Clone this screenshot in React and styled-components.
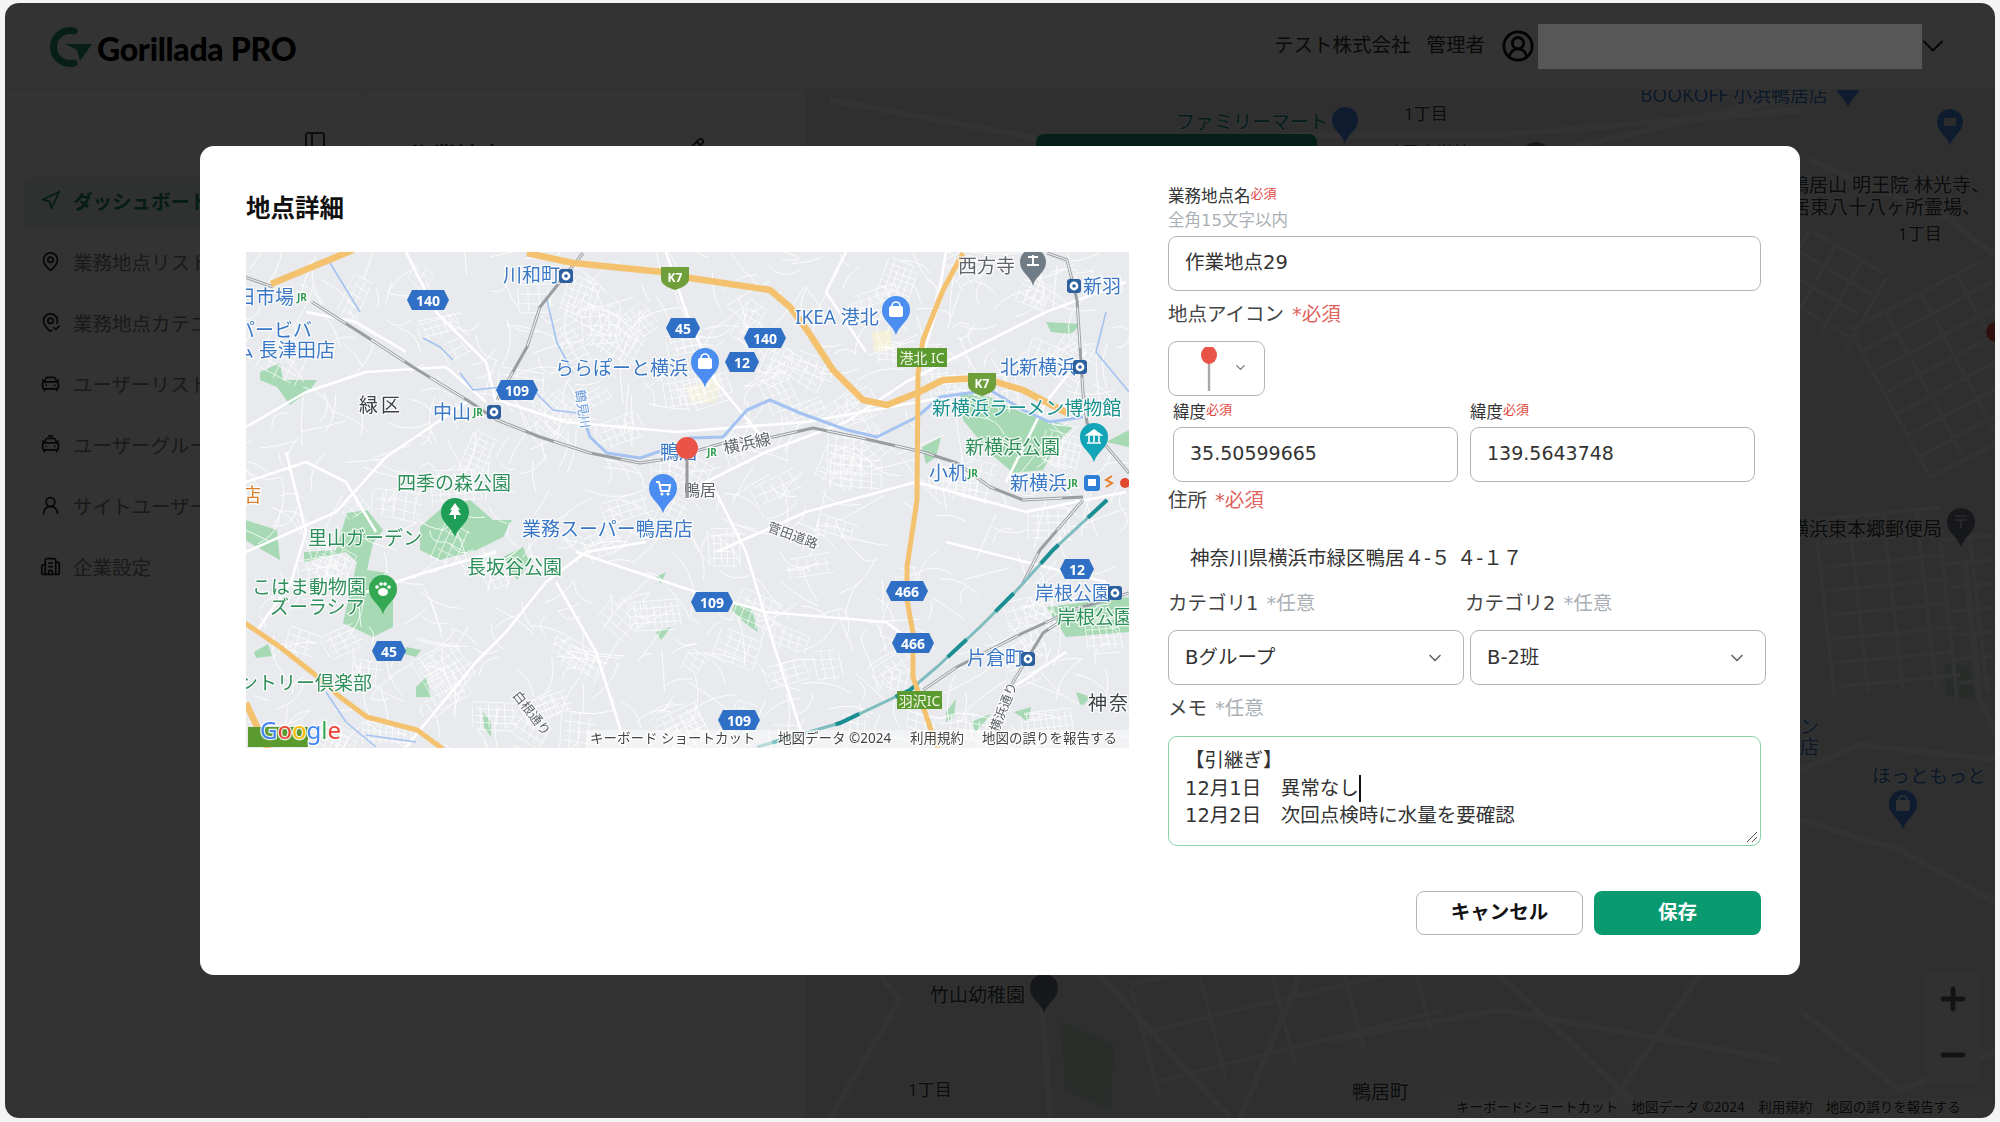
import styled, { createGlobalStyle } from "styled-components";
import {
  Building2,
  CarFront,
  CarTaxiFront,
  ChevronDown,
  CircleUserRound,
  MapPin,
  MapPinCheck,
  Minus,
  Navigation,
  PanelLeft,
  Pencil,
  Plus,
  UserRound,
} from "lucide-react";

const UI_FONT = `"DejaVu Sans", "Noto Sans CJK JP", sans-serif`;
const MAP_FONT = `"Noto Sans", "Noto Sans CJK JP", sans-serif`;

const GlobalStyle = createGlobalStyle`
  html, body {
    margin: 0;
    padding: 0;
    background: #f4f4f4;
  }
  body {
    font-family: ${UI_FONT};
    color: #333;
  }
  * {
    box-sizing: border-box;
  }
`;

const Window = styled.div`
  position: relative;
  width: 1990px;
  height: 1115px;
  margin: 3px 5px 4px;
  border-radius: 14px;
  overflow: hidden;
  background: #fff;
  display: flex;
  flex-direction: column;
`;

const Header = styled.header`
  height: 87px;
  flex: none;
  display: flex;
  align-items: center;
  justify-content: space-between;
  padding: 0 44px 0 45px;
  border-bottom: 1px solid #e4e4e4;
`;

const Logo = styled.div`
  display: flex;
  align-items: center;
  gap: 3px;
  margin-top: 1px;
`;

const LogoText = styled.span`
  font-family: Lato, sans-serif;
  font-weight: 900;
  font-size: 32px;
  color: #000;
  letter-spacing: -0.3px;
  margin-top: 3px;
`;

const HeaderRight = styled.div`
  display: flex;
  align-items: center;
  color: #555;
  font-size: 19.5px;
`;

const HeaderText = styled.span`
  margin: -6px 16px 0 0;
  color: #333;
`;

const RedactSlot = styled.div`
  width: 374px;
  height: 45px;
  margin: 0 3px;
`;

const RedactBar = styled.div`
  position: absolute;
  left: 1533px;
  top: 21px;
  width: 384px;
  height: 45px;
  background: #575757;
  z-index: 3;
`;

const Body = styled.div`
  flex: 1;
  display: flex;
  min-height: 0;
`;

const Sidebar = styled.aside`
  width: 357px;
  flex: none;
  padding: 0 13px 0 18px;
`;

const SidebarTop = styled.div`
  height: 87px;
  display: flex;
  justify-content: flex-end;
  padding: 40px 22px 0 0;
  color: #444;
`;

const NavList = styled.nav`
  display: flex;
  flex-direction: column;
  gap: 10px;
`;

const NavItem = styled.div`
  height: 51px;
  display: flex;
  align-items: center;
  gap: 12px;
  padding: 0 0 4px 17px;
  border-radius: 8px;
  font-size: 19.5px;
  white-space: nowrap;
  color: ${({ $active }) => ($active ? "#1a8a68" : "#808080")};
  background: ${({ $active }) => ($active ? "#e4f3ed" : "transparent")};
  font-weight: ${({ $active }) => ($active ? 700 : 400)};

  svg {
    flex: none;
    color: ${({ $active }) => ($active ? "#1a8a68" : "#222")};
  }
`;

const ListPane = styled.section`
  width: 443px;
  flex: none;
  border-left: 1px solid #ececec;
  display: flex;
  align-items: flex-start;
  justify-content: space-between;
  padding: 47px 100px 0 45px;
  font-size: 24px;
  font-weight: 700;
  color: #333;
`;

const BackMapArea = styled.div`
  position: relative;
  flex: 1;
  min-width: 0;
  background: #e8eaed;
`;

const BackMapSvg = styled.svg`
  display: block;
  width: 100%;
  height: 100%;
`;

const RouteButton = styled.div`
  position: absolute;
  left: 231px;
  top: 44px;
  width: 281px;
  height: 54px;
  border-radius: 8px;
  background: #1f9c78;
`;

const ZoomControl = styled.div`
  position: absolute;
  right: 15px;
  bottom: 35px;
  width: 55px;
  height: 112px;
  display: flex;
  flex-direction: column;
  background: #f3f3f3;
  color: #666;
`;

const ZoomButton = styled.div`
  flex: 1;
  display: flex;
  align-items: center;
  justify-content: center;
`;

const Overlay = styled.div`
  position: absolute;
  inset: 0;
  z-index: 2;
  display: flex;
  align-items: center;
  justify-content: center;
  background: rgba(0, 0, 0, 0.8);
`;

const Modal = styled.div`
  width: 1600px;
  height: 829px;
  display: grid;
  grid-template-columns: 883px 593px;
  column-gap: 39px;
  padding: 40px 0 0 46px;
  border-radius: 14px;
  background: #fff;
`;

const MapColumn = styled.div`
  padding-top: 5px;
`;

const ModalTitle = styled.h2`
  margin: 0 0 25px;
  height: 36px;
  line-height: 36px;
  font-size: 24.5px;
  font-weight: 700;
  color: #111;
`;

const MapSvg = styled.svg`
  display: block;
  width: 883px;
  height: 496px;
  background: #e8eaed;
  filter: blur(0.3px);
`;

const MapText = styled.text`
  font-family: ${MAP_FONT};
  font-size: ${({ $size }) => $size || 19}px;
  font-weight: ${({ $bold }) => ($bold ? 700 : 400)};
  fill: ${({ $tone }) => TONES[$tone] || $tone};
  dominant-baseline: central;
  text-anchor: ${({ $anchor }) => $anchor || "start"};
  stroke: ${({ $halo }) => ($halo === false ? "none" : "rgba(255,255,255,.85)")};
  stroke-width: 2.5px;
  paint-order: stroke;
  letter-spacing: ${({ $spacing }) => $spacing || 0}px;
`;

const FormColumn = styled.form`
  display: flex;
  flex-direction: column;
  margin: 0;
`;

const SmallLabel = styled.div`
  height: 20px;
  line-height: 20px;
  padding-top: 1px;
  font-size: 16.5px;
  color: #333;
  white-space: nowrap;
`;

const TinyRequired = styled.span`
  font-size: 13px;
  color: #e0443e;
  position: relative;
  top: -4px;
`;

const Hint = styled.div`
  height: 20px;
  line-height: 20px;
  margin: 5px 0;
  font-size: 16.5px;
  color: #aab0b5;
`;

const BigLabel = styled.div`
  height: 28px;
  line-height: 28px;
  padding-top: 1px;
  margin-top: ${({ $top }) => $top}px;
  font-size: 19.5px;
  color: #444;
  white-space: nowrap;
`;

const Mark = styled.span`
  margin-left: 8px;
  color: ${({ $optional }) => ($optional ? "#aab0b5" : "#e0605a")};
`;

const TextInput = styled.input`
  display: block;
  width: ${({ $width }) => $width || 593}px;
  height: 55px;
  padding: ${({ $numeric }) => ($numeric ? "0 16px 3px" : "0 16px 6px")};
  border: 1.5px solid #b4b4b4;
  border-radius: 9px;
  outline: none;
  background: #fff;
  font-family: ${UI_FONT};
  font-size: ${({ $numeric }) => ($numeric ? 19 : 19.5)}px;
  color: #333;
`;

const IconPicker = styled.div`
  width: 97px;
  height: 55px;
  margin-top: 13px;
  padding: 5px 0 0 32px;
  display: flex;
  gap: 16px;
  border: 1.5px solid #b4b4b4;
  border-radius: 9px;
  color: #777;

  svg:last-child {
    margin-top: 13px;
  }
`;

const CoordRow = styled.div`
  display: grid;
  grid-template-columns: 285px 285px;
  column-gap: 12px;
  margin: 6px 0 0 5px;
`;

const CoordField = styled.div`
  display: flex;
  flex-direction: column;
  gap: 5px;
`;

const AddressText = styled.div`
  height: 28px;
  line-height: 28px;
  margin-top: 29px;
  padding: 2px 0 0 22px;
  font-size: 19.5px;
  color: #333;
`;

const CategoryRow = styled.div`
  display: grid;
  grid-template-columns: 297px 301px;
  margin-top: 18px;
`;

const Dropdown = styled.div`
  width: 296px;
  height: 55px;
  margin: 13px 0 0 ${({ $offset }) => $offset || 0}px;
  padding: 0 18px 5px 16px;
  display: flex;
  align-items: center;
  justify-content: space-between;
  border: 1.5px solid #b4b4b4;
  border-radius: 9px;
  font-size: 19.5px;
  color: #333;

  svg {
    color: #666;
    margin-top: 5px;
  }
`;

const MemoBox = styled.div`
  position: relative;
  height: 110px;
  margin-top: 14px;
  padding: 10px 16px;
  border: 1.5px solid #86d3aa;
  border-radius: 9px;
  font-size: 19.5px;
  line-height: 27.5px;
  white-space: pre-wrap;
  color: #333;
`;

const Caret = styled.span`
  display: inline-block;
  width: 2px;
  height: 27px;
  margin-bottom: -7px;
  background: #111;
`;

const ResizeGrip = styled.svg`
  position: absolute;
  right: 2px;
  bottom: 2px;
`;

const ButtonRow = styled.div`
  display: flex;
  justify-content: flex-end;
  gap: 11px;
  margin-top: 45px;
`;

const Button = styled.button`
  width: 167px;
  height: 44px;
  padding: 0 0 5px;
  border-radius: 8px;
  border: ${({ $primary }) => ($primary ? "none" : "1.5px solid #b4b4b4")};
  background: ${({ $primary }) => ($primary ? "#0a9a6f" : "#fff")};
  color: ${({ $primary }) => ($primary ? "#fff" : "#111")};
  font-family: ${UI_FONT};
  font-size: 19.5px;
  font-weight: 700;
`;

const TONES = {
  blue: "#3a78c6",
  green: "#2f8f5b",
  teal: "#18918f",
  gray: "#5f6368",
  dark: "#3c4043",
  orange: "#d9822b",
};

// seeded so the street texture stays the same between renders
let seed = 4217;
const rnd = () => {
  seed = (seed * 16807) % 2147483647;
  return seed / 2147483647;
};

function gridPatch(x, y, w, h, angle, stepX, stepY) {
  const rad = (angle * Math.PI) / 180;
  const pt = (px, py) => {
    const rx = px * Math.cos(rad) - py * Math.sin(rad);
    const ry = px * Math.sin(rad) + py * Math.cos(rad);
    return `${(x + rx).toFixed(1)} ${(y + ry).toFixed(1)}`;
  };
  let d = "";
  for (let py = 0; py <= h; py += stepY) {
    d += `M${pt(rnd() * 6, py)}L${pt(w - rnd() * 6, py + rnd() * 2)}`;
  }
  for (let px = 0; px <= w; px += stepX) {
    d += `M${pt(px, rnd() * 5)}L${pt(px + rnd() * 2, h - rnd() * 5)}`;
  }
  return d;
}

function streets(count, width, height, reach) {
  let d = "";
  for (let i = 0; i < count; i += 1) {
    const x = rnd() * width;
    const y = rnd() * height;
    const a = rnd() * Math.PI * 2;
    const len = reach * (0.4 + rnd());
    const bend = (rnd() - 0.5) * reach * 0.7;
    const mx = x + (Math.cos(a) * len) / 2 - Math.sin(a) * bend;
    const my = y + (Math.sin(a) * len) / 2 + Math.cos(a) * bend;
    d += `M${x.toFixed(1)} ${y.toFixed(1)}Q${mx.toFixed(1)} ${my.toFixed(1)} ${(x + Math.cos(a) * len).toFixed(1)} ${(y + Math.sin(a) * len).toFixed(1)}`;
  }
  return d;
}

const line = (pts) => "M" + pts.map((p) => p.join(" ")).join("L");
const area = (pts) => pts.map((p) => p.join(",")).join(" ");

const FINE_STREETS = streets(620, 883, 496, 38);

function scatterPatches(count) {
  let d = "";
  for (let i = 0; i < count; i += 1) {
    d += gridPatch(
      rnd() * 860,
      rnd() * 480,
      22 + rnd() * 34,
      18 + rnd() * 28,
      (rnd() - 0.5) * 80,
      6 + rnd() * 5,
      6 + rnd() * 4,
    );
  }
  return d;
}

const GRID_STREETS = scatterPatches(110);

const MAIN_ROADS = [
  [[0, 175], [60, 140], [120, 120], [200, 115], [240, 150]],
  [[40, 200], [60, 280], [45, 330], [10, 380]],
  [[0, 300], [90, 260], [140, 205], [221, 150]],
  [[160, 495], [230, 410], [260, 380], [300, 330], [340, 300], [400, 290]],
  [[251, 148], [320, 170], [430, 180], [560, 170], [700, 145]],
  [[440, 240], [520, 200], [600, 170], [660, 130], [800, 60], [880, 30]],
  [[330, 300], [450, 340], [520, 360], [640, 370], [680, 400]],
  [[470, 300], [560, 260], [670, 230], [780, 260], [880, 240]],
  [[560, 495], [530, 400], [500, 300], [470, 240]],
  [[740, 495], [760, 440], [820, 400]],
  [[700, 290], [780, 310], [860, 330]],
  [[380, 495], [350, 400], [310, 330]],
  [[120, 340], [180, 320], [250, 300]],
  [[160, 0], [190, 60], [240, 110], [250, 150]],
  [[60, 60], [110, 70], [160, 100]],
  [[420, 0], [440, 60], [470, 130], [520, 190]],
  [[0, 230], [60, 210], [100, 230], [130, 280]],
  [[700, 0], [690, 60], [672, 120]],
  [[840, 100], [800, 150], [760, 230]],
  [[600, 0], [580, 40], [620, 100]],
];

const HIGHWAYS = [
  [[25, 32], [107, -2]],
  [[281, 1], [327, 11], [417, 20], [444, 26], [524, 38], [544, 55], [561, 78], [587, 118], [617, 148], [641, 153], [671, 141], [697, 128], [737, 126], [777, 138], [821, 161]],
  [[717, 1], [697, 38], [677, 88], [672, 121], [671, 248], [661, 315], [661, 348], [667, 381], [667, 425], [684, 475], [692, 497]],
  [[-1, 371], [34, 395], [67, 421], [94, 445], [121, 465], [171, 478], [197, 497]],
  [[0, 451], [14, 481], [22, 497]],
];

const RAILS = [
  [[-1, 25], [27, 35]],
  [[66, 50], [121, 85], [167, 115], [221, 148], [251, 168], [294, 185], [344, 201], [394, 211], [427, 206], [477, 191], [527, 185], [567, 176], [611, 185], [677, 200], [711, 211], [744, 235], [777, 248], [837, 245]],
  [[337, 1], [294, 55], [281, 95], [251, 148]],
  [[801, 1], [821, 8], [831, 48], [837, 141], [841, 171], [883, 221]],
  [[677, 438], [711, 415], [777, 381], [827, 358], [883, 341]],
  [[837, 248], [794, 298], [777, 331]],
  [[764, 435], [797, 381], [827, 361]],
];

const BULLET_TRAIN = [[861, 248], [807, 298], [771, 338], [734, 375], [691, 415], [664, 438], [594, 471], [511, 495]];

const RIVERS = [
  [[334, 155], [344, 185], [361, 201], [394, 206], [427, 195], [444, 186], [477, 185], [501, 158], [524, 148], [554, 161], [601, 178], [631, 185], [671, 165], [694, 145], [744, 138], [777, 158], [804, 170], [837, 165]],
  [[301, 48], [311, 91], [327, 121]],
  [[214, 121], [227, 138], [257, 135], [287, 138], [307, 158], [331, 161]],
  [[177, 86], [194, 95], [207, 108]],
  [[84, 11], [114, 60]],
  [[80, 440], [100, 470], [130, 495]],
  [[120, 483], [170, 490]],
  [[860, 60], [850, 100], [883, 140]],
];

const PARKS = [
  [[14, 120], [34, 111], [37, 128], [71, 128], [64, 138], [44, 153], [31, 135], [14, 128]],
  [[174, 275], [197, 255], [224, 248], [247, 268], [266, 268], [257, 285], [231, 298], [194, 308], [174, 298]],
  [[-1, 268], [31, 278], [34, 308], [4, 291], [-1, 288]],
  [[101, 261], [121, 258], [137, 278], [127, 291], [121, 318], [141, 321], [147, 341], [147, 375], [127, 385], [97, 371], [104, 340], [111, 310], [100, 300], [58, 310], [58, 300], [90, 298]],
  [[257, 305], [277, 295], [284, 311], [271, 328]],
  [[714, 141], [744, 145], [777, 161], [827, 175], [811, 191], [797, 218], [767, 221], [744, 201], [717, 168]],
  [[676, 195], [695, 185], [690, 205], [680, 212]],
  [[800, 70], [835, 72], [825, 82], [805, 80]],
  [[860, 190], [883, 178], [883, 195]],
  [[490, 350], [505, 355], [512, 380], [500, 372], [486, 358]],
  [[700, 460], [710, 447], [708, 465], [700, 470]],
  [[725, 470], [745, 462], [730, 480]],
  [[768, 460], [785, 455], [782, 470]],
  [[830, 440], [845, 445], [835, 455]],
  [[800, 355], [883, 345], [883, 380], [820, 385]],
  [[160, 395], [175, 398], [170, 405], [158, 402]],
  [[170, 435], [180, 425], [185, 445], [170, 445]],
  [[8, 400], [22, 392], [26, 404], [10, 406]],
  [[237, 460], [245, 470], [245, 485], [238, 475]],
  [[410, 325], [420, 320], [415, 332]],
  [[410, 380], [425, 375], [415, 388]],
];

const BADGES = [
  [182, 48, "140"],
  [437, 76, "45"],
  [271, 138, "109"],
  [519, 86, "140"],
  [496, 110, "12"],
  [466, 350, "109"],
  [831, 317, "12"],
  [493, 468, "109"],
  [143, 399, "45"],
  [661, 339, "466"],
  [667, 391, "466"],
];

const LABELS = [
  ["川和町", 257, 23, "blue"],
  ["日市場", -9, 45, "blue"],
  ["スーパービバ", 66, 78, "blue", { anchor: "end" }],
  ["ホーム 長津田店", 89, 98, "blue", { anchor: "end" }],
  ["ららぽーと横浜", 309, 116, "blue"],
  ["IKEA 港北", 549, 65, "blue"],
  ["西方寺", 712, 14, "gray"],
  ["新羽", 837, 34, "blue"],
  ["北新横浜", 754, 115, "blue"],
  ["新横浜ラーメン博物館", 686, 156, "teal"],
  ["新横浜公園", 719, 195, "green"],
  ["小机", 683, 221, "blue"],
  ["新横浜", 764, 231, "blue"],
  ["鴨居", 414, 200, "blue"],
  ["鴨居", 438, 238, "gray", { size: 16 }],
  ["業務スーパー鴨居店", 276, 277, "blue"],
  ["緑区", 113, 153, "dark", { spacing: 3 }],
  ["中山", 187, 160, "blue"],
  ["四季の森公園", 151, 231, "green"],
  ["里山ガーデン", 62, 286, "green"],
  ["長坂谷公園", 221, 315, "green"],
  ["こはま動物園", 6, 335, "green"],
  ["ズーラシア", 24, 355, "green"],
  ["カントリー倶楽部", 126, 431, "green", { anchor: "end" }],
  ["店", -4, 243, "orange"],
  ["岸根公園", 789, 341, "blue"],
  ["岸根公園", 811, 365, "green"],
  ["片倉町", 721, 406, "blue"],
  ["神奈川", 842, 451, "dark", { spacing: 2 }],
];

const TILTED_LABELS = [
  ["横浜線", 501, 191, -12, "gray", 16],
  ["白根通り", 286, 461, 52, "gray", 13],
  ["菅田道路", 547, 283, 20, "gray", 13],
  ["横浜通り", 757, 455, -68, "gray", 13],
  ["鶴見川", 337, 157, 82, "#6a9bd8", 13],
];

const ATTRIBUTION = [
  ["キーボード ショートカット", 344],
  ["地図データ ©2024", 532],
  ["利用規約", 664],
  ["地図の誤りを報告する", 736],
];

function Badge({ x, y, label }) {
  const w = label.length > 2 ? 16 : 12;
  return (
    <g transform={`translate(${x} ${y})`}>
      <polygon
        points={`${-w - 5},0 ${-w},-10 ${w},-10 ${w + 5},0 ${w},10 ${-w},10`}
        fill="#2f6fc6"
      />
      <MapText $tone="#fff" $size={14} $bold $anchor="middle" $halo={false}>
        {label}
      </MapText>
    </g>
  );
}

function Pin({ x, y, r = 14, color, children }) {
  return (
    <g transform={`translate(${x} ${y})`}>
      <path
        d={`M${-r} 0A${r} ${r} 0 1 1 ${r} 0C${r} ${r * 0.8} ${r * 0.25} ${r} 0 ${r * 1.8}C${-r * 0.25} ${r} ${-r} ${r * 0.8} ${-r} 0Z`}
        fill={color}
      />
      {children}
    </g>
  );
}

const BagGlyph = () => (
  <>
    <rect x="-7" y="-4" width="14" height="11" rx="2" fill="#fff" />
    <path d="M-4 -4a4 4 0 0 1 8 0" fill="none" stroke="#fff" strokeWidth="1.6" />
  </>
);

function MetroIcon({ x, y }) {
  return (
    <g transform={`translate(${x} ${y})`}>
      <rect x="-7" y="-7" width="14" height="14" rx="3" fill="#2b5f9e" />
      <circle r="4.4" fill="#fff" />
      <circle r="1.8" fill="#2b5f9e" />
    </g>
  );
}

function JrIcon({ x, y }) {
  return (
    <MapText x={x} y={y} $tone="#2e9c4f" $size={10} $bold $anchor="middle">
      JR
    </MapText>
  );
}

function SignBox({ x, y, w, h, label }) {
  return (
    <g>
      <rect x={x} y={y} width={w} height={h} fill="#5b9a2f" />
      {label && (
        <MapText x={x + w / 2} y={y + h / 2} $tone="#f2f7e8" $size={14} $anchor="middle" $halo={false}>
          {label}
        </MapText>
      )}
    </g>
  );
}

function Shield({ x, y }) {
  return (
    <g transform={`translate(${x} ${y})`}>
      <path d="M-14 -10H14V2C14 8 6 11 0 13C-6 11 -14 8 -14 2Z" fill="#6f9f3a" />
      <MapText $tone="#fff" $size={12} $bold $anchor="middle" $halo={false}>
        K7
      </MapText>
    </g>
  );
}

function LocationMap() {
  return (
    <MapSvg viewBox="0 0 883 496">
      {PARKS.map((p, i) => (
        <polygon key={i} points={area(p)} fill="#a6d9b4" />
      ))}
      <polygon points={area([[626, 80], [645, 78], [645, 98], [628, 100]])} fill="#f6f1d5" opacity="0.8" />
      <polygon points={area([[440, 135], [475, 125], [470, 150], [445, 152]])} fill="#f6f1d5" opacity="0.6" />
      <path d={FINE_STREETS} fill="none" stroke="#fff" strokeWidth="1" opacity="0.85" />
      <path d={GRID_STREETS} fill="none" stroke="#fff" strokeWidth="0.9" opacity="0.8" />
      {MAIN_ROADS.map((r, i) => (
        <path key={i} d={line(r)} fill="none" stroke="#fff" strokeWidth="2.6" strokeLinejoin="round" />
      ))}
      {RIVERS.map((r, i) => (
        <path key={i} d={line(r)} fill="none" stroke="#a4c3f2" strokeWidth={i === 0 ? 3 : 1.6} strokeLinejoin="round" />
      ))}
      {RAILS.map((r, i) => (
        <g key={i} fill="none" strokeLinejoin="round">
          <path d={line(r)} stroke="#9a9da1" strokeWidth="3" />
          <path d={line(r)} stroke="#eceef0" strokeWidth="1.2" strokeDasharray="40 30" />
        </g>
      ))}
      <path d={line(BULLET_TRAIN)} fill="none" stroke="#7fbcc0" strokeWidth="3" />
      <path d={line(BULLET_TRAIN)} fill="none" stroke="#1b8e94" strokeWidth="4" strokeDasharray="26 40" />
      {HIGHWAYS.map((h, i) => (
        <path key={i} d={line(h)} fill="none" stroke="#f4c26e" strokeWidth={i === 2 || i === 3 ? 5 : 6.5} strokeLinejoin="round" />
      ))}

      {BADGES.map(([x, y, label], i) => (
        <Badge key={i} x={x} y={y} label={label} />
      ))}
      <Shield x={429} y={25} />
      <Shield x={736} y={131} />
      <SignBox x={651} y={96} w={50} h={19} label="港北 IC" />
      <SignBox x={651} y={439} w={45} h={18} label="羽沢IC" />
      <SignBox x={2} y={475} w={60} h={20} />

      {LABELS.map(([text, x, y, tone, opts = {}], i) => (
        <MapText key={i} x={x} y={y} $tone={tone} $anchor={opts.anchor} $size={opts.size} $spacing={opts.spacing}>
          {text}
        </MapText>
      ))}
      {TILTED_LABELS.map(([text, x, y, rot, tone, size], i) => (
        <MapText key={i} x={x} y={y} $tone={tone} $size={size} $anchor="middle" transform={`rotate(${rot} ${x} ${y})`}>
          {text}
        </MapText>
      ))}

      <MetroIcon x={320} y={24} />
      <MetroIcon x={248} y={160} />
      <MetroIcon x={828} y={34} />
      <MetroIcon x={834} y={115} />
      <MetroIcon x={869} y={341} />
      <MetroIcon x={782} y={407} />
      <JrIcon x={56} y={45} />
      <JrIcon x={232} y={160} />
      <JrIcon x={466} y={200} />
      <JrIcon x={727} y={221} />
      <JrIcon x={827} y={231} />
      <rect x="838" y="223" width="16" height="16" rx="3" fill="#2f7fd6" />
      <rect x="842" y="227" width="8" height="7" fill="#fff" />
      <path d="M866 224l-6 4 6 3-6 4" fill="none" stroke="#e8812a" strokeWidth="2" />
      <circle cx="879" cy="231" r="5" fill="#e0492f" />

      <Pin x={650} y={58} r={14} color="#4b8df0">
        <BagGlyph />
      </Pin>
      <Pin x={459} y={110} r={14} color="#4b8df0">
        <BagGlyph />
      </Pin>
      <Pin x={787} y={10} r={13} color="#6f7b85">
        <path d="M-5 -5H5M0 -7V3M-6 3H6" stroke="#fff" strokeWidth="2" />
      </Pin>
      <Pin x={848} y={185} r={14} color="#12a5b8">
        <path d="M-7 -2L0 -7L7 -2ZM-5 -1V5M0 -1V5M5 -1V5M-7 6H7" stroke="#fff" strokeWidth="1.6" fill="#fff" />
      </Pin>
      <Pin x={417} y={236} r={14} color="#4b8df0">
        <path d="M-7 -6H-4L-2 3H6L7 -3H-3" fill="none" stroke="#fff" strokeWidth="2" />
        <circle cx="-1" cy="6" r="1.5" fill="#fff" />
        <circle cx="5" cy="6" r="1.5" fill="#fff" />
      </Pin>
      <Pin x={209} y={260} r={14} color="#1e9e56">
        <path d="M0 -9L5 -2H3L6 3H1V7H-1V3H-6L-3 -2H-5Z" fill="#fff" />
      </Pin>
      <Pin x={137} y={337} r={14} color="#34a853">
        <ellipse cx="0" cy="3" rx="5" ry="4" fill="#fff" />
        <circle cx="-6" cy="-2" r="1.8" fill="#fff" />
        <circle cx="-2" cy="-5" r="1.8" fill="#fff" />
        <circle cx="2" cy="-5" r="1.8" fill="#fff" />
        <circle cx="6" cy="-2" r="1.8" fill="#fff" />
      </Pin>
      <rect x="439.5" y="200" width="3" height="46" fill="#9a9a9a" />
      <circle cx="441" cy="196" r="11" fill="#ea5347" />

      <MapText x={14} y={477} $tone="#4285f4" $size={24}>
        G<tspan fill="#ea4335">o</tspan>
        <tspan fill="#fbbc05">o</tspan>
        <tspan fill="#4285f4">g</tspan>
        <tspan fill="#34a853">l</tspan>
        <tspan fill="#ea4335">e</tspan>
      </MapText>

      <rect x="340" y="478" width="543" height="18" fill="#fff" opacity="0.45" />
      {ATTRIBUTION.map(([text, x]) => (
        <MapText key={text} x={x} y={486} $tone="#444" $size={13.5}>
          {text}
        </MapText>
      ))}
    </MapSvg>
  );
}

const BACK_GRID = [
  gridPatch(1850, 330, 150, 170, -28, 40, 24),
  gridPatch(1815, 520, 130, 180, -6, 34, 24),
  gridPatch(1940, 540, 60, 160, -6, 30, 24),
  gridPatch(1810, 230, 90, 90, 30, 30, 24),
  gridPatch(1130, 985, 300, 120, -14, 70, 50),
].join("");

const BACK_ROADS = [
  [[830, 100], [1100, 150], [1300, 135], [1500, 135], [1800, 110]],
  [[1560, 150], [1800, 95]],
  [[1810, 160], [1950, 220], [2000, 260]],
  [[1800, 820], [1900, 850], [2000, 905]],
  [[1800, 770], [1860, 745], [2000, 760]],
  [[1965, 560], [1980, 700], [2000, 740]],
  [[830, 1118], [900, 1000], [880, 975]],
  [[1040, 975], [1050, 1118]],
  [[1100, 975], [1230, 1118]],
  [[1300, 975], [1240, 1118]],
  [[1500, 975], [1650, 1118]],
  [[1700, 975], [1600, 1118]],
  [[1800, 1010], [1900, 1090], [2000, 1050]],
  [[1330, 1040], [1500, 1010], [1780, 1060]],
];

const BACK_LABELS = [
  ["ファミリーマート", 1176, 122, "teal", 19],
  ["1丁目", 1404, 113, "dark", 17],
  ["BOOKOFF 小浜鴨居店", 1640, 95, "blue", 19],
  ["鴨居中学校", 1385, 152, "dark", 17],
  ["鴨居山 明王院 林光寺、", 1790, 185, "dark", 19],
  ["鴨居東八十八ヶ所霊場、", 1772, 207, "dark", 19],
  ["1丁目", 1898, 233, "dark", 17],
  ["横浜東本郷郵便局", 1790, 529, "dark", 19],
  ["ン", 1800, 727, "blue", 19],
  ["店", 1800, 747, "blue", 19],
  ["ほっともっと", 1872, 776, "blue", 19],
  ["竹山幼稚園", 930, 995, "dark", 19],
  ["1丁目", 908, 1089, "dark", 17],
  ["鴨居町", 1352, 1092, "dark", 19],
];

function BackgroundMap() {
  return (
    <BackMapSvg>
      <g transform="translate(-805 -90)">
        <polygon points="1945,665 1970,665 1975,700 1945,695" fill="#a6d9b4" opacity="0.5" />
        <polygon points="1060,1020 1115,1045 1110,1110 1065,1090" fill="#a6d9b4" opacity="0.4" />
        <path d={BACK_GRID} fill="none" stroke="#fff" strokeWidth="3.5" />
        {BACK_ROADS.map((r, i) => (
          <path key={i} d={line(r)} fill="none" stroke="#fff" strokeWidth="6" strokeLinejoin="round" />
        ))}
        {BACK_LABELS.map(([text, x, y, tone, size]) => (
          <MapText key={text + x} x={x} y={y} $tone={tone} $size={size}>
            {text}
          </MapText>
        ))}
        <Pin x={1345} y={120} r={13} color="#4b8df0" />
        <Pin x={1848} y={84} r={13} color="#4b8df0" />
        <Pin x={1950} y={122} r={13} color="#4b8df0">
          <rect x="-6" y="-4" width="12" height="8" fill="#ddd" />
        </Pin>
        <Pin x={1536} y={156} r={14} color="#6f7b85" />
        <Pin x={1961} y={522} r={14} color="#6f7b85">
          <path d="M-6 -6H6M-6 -2H6M0 -2V6" stroke="#ddd" strokeWidth="1.6" />
        </Pin>
        <Pin x={1903} y={804} r={14} color="#4b8df0">
          <BagGlyph />
        </Pin>
        <Pin x={1044} y={988} r={14} color="#6f7b85" />
        <circle cx="1996" cy="332" r="10" fill="#ea5347" />
        <rect x="1440" y="1098" width="560" height="20" fill="#fff" opacity="0.5" />
        <MapText x={1456} y={1107} $tone="#333" $size={13.5}>
          キーボードショートカット　地図データ ©2024　利用規約　地図の誤りを報告する
        </MapText>
      </g>
    </BackMapSvg>
  );
}

function LogoMark() {
  return (
    <svg width="44" height="42" viewBox="0 0 44 42">
      <path d="M24 5A16.5 16.5 0 1 0 24 37" fill="none" stroke="#2b9c7c" strokeWidth="7" strokeLinecap="round" />
      <path d="M15 18H42L30 35L27 24Z" fill="#2b9c7c" />
    </svg>
  );
}

const NAV_ITEMS = [
  { label: "ダッシュボード", Icon: Navigation, active: true },
  { label: "業務地点リスト", Icon: MapPin },
  { label: "業務地点カテゴリ", Icon: MapPinCheck },
  { label: "ユーザーリスト", Icon: CarFront },
  { label: "ユーザーグループ", Icon: CarTaxiFront },
  { label: "サイトユーザー", Icon: UserRound },
  { label: "企業設定", Icon: Building2 },
];

function Required() {
  return <TinyRequired>必須</TinyRequired>;
}

function DetailForm() {
  return (
    <FormColumn>
      <SmallLabel>
        業務地点名<Required />
      </SmallLabel>
      <Hint>全角15文字以内</Hint>
      <TextInput readOnly value="作業地点29" />

      <BigLabel $top={9}>
        地点アイコン<Mark>*必須</Mark>
      </BigLabel>
      <IconPicker>
        <svg width="16" height="44" viewBox="0 0 16 44">
          <rect x="6.8" y="10" width="2.4" height="34" fill="#a8a8a8" />
          <ellipse cx="8" cy="8" rx="8" ry="9" fill="#ea5347" />
        </svg>
        <ChevronDown size={15} />
      </IconPicker>

      <CoordRow>
        <CoordField>
          <SmallLabel>
            緯度<Required />
          </SmallLabel>
          <TextInput $width={285} $numeric readOnly value="35.50599665" />
        </CoordField>
        <CoordField>
          <SmallLabel>
            緯度<Required />
          </SmallLabel>
          <TextInput $width={285} $numeric readOnly value="139.5643748" />
        </CoordField>
      </CoordRow>

      <BigLabel $top={4}>
        住所<Mark>*必須</Mark>
      </BigLabel>
      <AddressText>神奈川県横浜市緑区鴨居４-５ ４-１７</AddressText>

      <CategoryRow>
        <div>
          <BigLabel $top={0}>
            カテゴリ1<Mark $optional>*任意</Mark>
          </BigLabel>
          <Dropdown>
            Bグループ
            <ChevronDown size={20} />
          </Dropdown>
        </div>
        <div>
          <BigLabel $top={0}>
            カテゴリ2<Mark $optional>*任意</Mark>
          </BigLabel>
          <Dropdown $offset={5}>
            B-2班
            <ChevronDown size={20} />
          </Dropdown>
        </div>
      </CategoryRow>

      <BigLabel $top={9}>
        メモ<Mark $optional>*任意</Mark>
      </BigLabel>
      <MemoBox>
        {"【引継ぎ】\n12月1日　異常なし"}
        <Caret />
        {"\n12月2日　次回点検時に水量を要確認"}
        <ResizeGrip width="12" height="12" viewBox="0 0 12 12">
          <path d="M1 11L11 1M6 11L11 6" stroke="#555" strokeWidth="1" />
        </ResizeGrip>
      </MemoBox>

      <ButtonRow>
        <Button type="button">キャンセル</Button>
        <Button type="button" $primary>
          保存
        </Button>
      </ButtonRow>
    </FormColumn>
  );
}

export default function App() {
  return (
    <>
      <GlobalStyle />
      <Window>
        <Header>
          <Logo>
            <LogoMark />
            <LogoText>Gorillada PRO</LogoText>
          </Logo>
          <HeaderRight>
            <HeaderText>テスト株式会社</HeaderText>
            <HeaderText>管理者</HeaderText>
            <CircleUserRound size={34} color="#111" />
            <RedactSlot />
            <ChevronDown size={36} strokeWidth={1.4} color="#222" />
          </HeaderRight>
        </Header>
        <Body>
          <Sidebar>
            <SidebarTop>
              <PanelLeft size={24} />
            </SidebarTop>
            <NavList>
              {NAV_ITEMS.map(({ label, Icon, active }) => (
                <NavItem key={label} $active={active}>
                  <Icon size={21} />
                  {label}
                </NavItem>
              ))}
            </NavList>
          </Sidebar>
          <ListPane>
            作業地点29
            <Pencil size={22} />
          </ListPane>
          <BackMapArea>
            <BackgroundMap />
            <RouteButton />
            <ZoomControl>
              <ZoomButton>
                <Plus size={34} strokeWidth={3.5} />
              </ZoomButton>
              <ZoomButton>
                <Minus size={34} strokeWidth={3.5} />
              </ZoomButton>
            </ZoomControl>
          </BackMapArea>
        </Body>
        <Overlay>
          <Modal>
            <MapColumn>
              <ModalTitle>地点詳細</ModalTitle>
              <LocationMap />
            </MapColumn>
            <DetailForm />
          </Modal>
        </Overlay>
        <RedactBar />
      </Window>
    </>
  );
}
